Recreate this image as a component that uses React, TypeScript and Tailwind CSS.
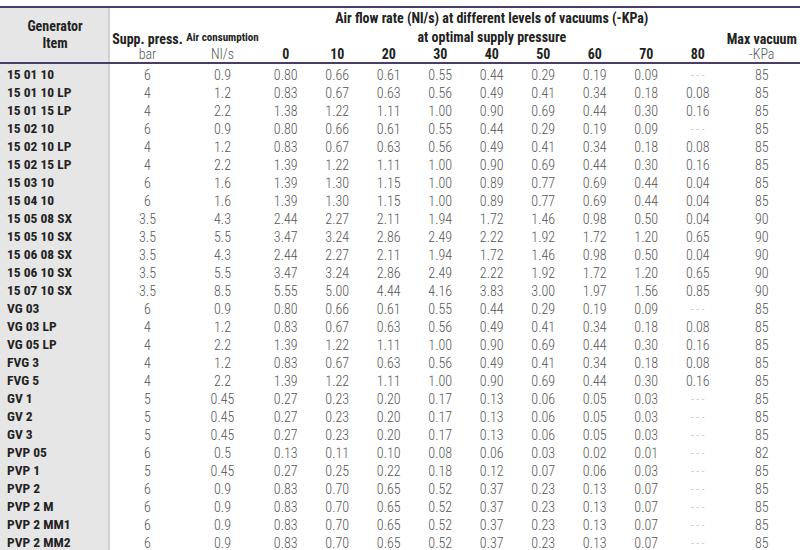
const font = "font-['Roboto_Condensed','Liberation_Sans_Narrow','DejaVu_Sans_Condensed',Roboto,sans-serif] [font-stretch:condensed]";

type Row = [string, string, string, string[], string];

const a = ['0.80', '0.66', '0.61', '0.55', '0.44', '0.29', '0.19', '0.09', '- - -'];
const b = ['0.83', '0.67', '0.63', '0.56', '0.49', '0.41', '0.34', '0.18', '0.08'];
const c = ['1.39', '1.22', '1.11', '1.00', '0.90', '0.69', '0.44', '0.30', '0.16'];
const d = ['1.39', '1.30', '1.15', '1.00', '0.89', '0.77', '0.69', '0.44', '0.04'];
const sx8 = ['2.44', '2.27', '2.11', '1.94', '1.72', '1.46', '0.98', '0.50', '0.04'];
const sx10 = ['3.47', '3.24', '2.86', '2.49', '2.22', '1.92', '1.72', '1.20', '0.65'];
const gv = ['0.27', '0.23', '0.20', '0.17', '0.13', '0.06', '0.05', '0.03', '- - -'];
const pvp2 = ['0.83', '0.70', '0.65', '0.52', '0.37', '0.23', '0.13', '0.07', '- - -'];

const rows: Row[] = [
  ['15 01 10', '6', '0.9', a, '85'],
  ['15 01 10 LP', '4', '1.2', b, '85'],
  ['15 01 15 LP', '4', '2.2', ['1.38', '1.22', '1.11', '1.00', '0.90', '0.69', '0.44', '0.30', '0.16'], '85'],
  ['15 02 10', '6', '0.9', a, '85'],
  ['15 02 10 LP', '4', '1.2', b, '85'],
  ['15 02 15 LP', '4', '2.2', c, '85'],
  ['15 03 10', '6', '1.6', d, '85'],
  ['15 04 10', '6', '1.6', d, '85'],
  ['15 05 08 SX', '3.5', '4.3', sx8, '90'],
  ['15 05 10 SX', '3.5', '5.5', sx10, '90'],
  ['15 06 08 SX', '3.5', '4.3', sx8, '90'],
  ['15 06 10 SX', '3.5', '5.5', sx10, '90'],
  ['15 07 10 SX', '3.5', '8.5', ['5.55', '5.00', '4.44', '4.16', '3.83', '3.00', '1.97', '1.56', '0.85'], '90'],
  ['VG 03', '6', '0.9', a, '85'],
  ['VG 03 LP', '4', '1.2', b, '85'],
  ['VG 05 LP', '4', '2.2', c, '85'],
  ['FVG 3', '4', '1.2', b, '85'],
  ['FVG 5', '4', '2.2', c, '85'],
  ['GV 1', '5', '0.45', gv, '85'],
  ['GV 2', '5', '0.45', gv, '85'],
  ['GV 3', '5', '0.45', gv, '85'],
  ['PVP 05', '6', '0.5', ['0.13', '0.11', '0.10', '0.08', '0.06', '0.03', '0.02', '0.01', '- - -'], '82'],
  ['PVP 1', '5', '0.45', ['0.27', '0.25', '0.22', '0.18', '0.12', '0.07', '0.06', '0.03', '- - -'], '85'],
  ['PVP 2', '6', '0.9', pvp2, '85'],
  ['PVP 2 M', '6', '0.9', pvp2, '85'],
  ['PVP 2 MM1', '6', '0.9', pvp2, '85'],
  ['PVP 2 MM2', '6', '0.9', pvp2, '85'],
];

const levels = ['0', '10', '20', '30', '40', '50', '60', '70', '80'];

const top = 'border-t-2 border-[#4a3d6b] p-0';
const bottom = 'border-b-2 border-[#4a3d6b] p-0';
const unit = `${bottom} text-[14px] font-light text-[#555] leading-none align-middle`;
const grey = 'bg-[#e6e6e6] shadow-[inset_-2px_0_0_#d2d2d2]';

export default function App() {
  return (
    <div className={`w-[800px] h-[550px] overflow-hidden bg-white pt-[6px] ${font}`}>
      <table className="w-[800px] table-fixed border-separate border-spacing-0">
        <colgroup>
          <col className="w-[110px]" />
          <col className="w-[75px]" />
          <col className="w-[75px]" />
          {levels.map((l) => (
            <col key={l} className="w-[51.5px]" />
          ))}
          <col />
        </colgroup>
        <thead className="text-[#222] whitespace-nowrap">
          <tr className="h-[22px]">
            <th
              rowSpan={3}
              className={`${grey} border-t-2 border-b-2 border-[#4a3d6b] p-0 text-[14px] leading-[17px] font-bold align-middle`}
            >
              Generator
              <br />
              Item
            </th>
            <th className={top} />
            <th className={top} />
            <th colSpan={9} className={`${top} text-[14px] font-bold leading-none`}>
              Air flow rate (Nl/s) at different levels of vacuums (-KPa)
            </th>
            <th className={top} />
          </tr>
          <tr className="h-[18px]">
            <th className="p-0 text-[14px] font-bold leading-none pt-[4px]">Supp. press.</th>
            <th className="p-0 text-[11px] font-bold leading-none pt-[1px]">Air consumption</th>
            <th colSpan={9} className="p-0 text-[14px] font-bold leading-none">
              at optimal supply pressure
            </th>
            <th className="p-0 text-[14px] font-bold leading-none pt-[4px]">Max vacuum</th>
          </tr>
          <tr className="h-[18px]">
            <th className={unit}>bar</th>
            <th className={unit}>Nl/s</th>
            {levels.map((l) => (
              <th key={l} className={`${bottom} text-[14px] font-bold leading-none align-middle`}>
                {l}
              </th>
            ))}
            <th className={unit}>-KPa</th>
          </tr>
        </thead>
        <tbody className="text-[14px] leading-none">
          <tr className="h-[2px]">
            <td className={`${grey} p-0`} />
            <td colSpan={12} className="p-0" />
          </tr>
          {rows.map(([item, sp, ac, vals, max], i) => (
            <tr key={i} className="h-[18px]">
              <td className={`${grey} p-0 pl-[7px] font-bold text-[#222] text-[13.5px] whitespace-nowrap`}>
                {item}
              </td>
              <td className="p-0 text-center font-light text-[#555]">{sp}</td>
              <td className="p-0 text-center font-light text-[#555]">{ac}</td>
              {vals.map((v, j) => (
                <td
                  key={j}
                  className={
                    v === '- - -'
                      ? 'p-0 text-center font-light text-[#aaa] text-[11px]'
                      : 'p-0 text-center font-light text-[#555]'
                  }
                >
                  {v}
                </td>
              ))}
              <td className="p-0 text-center font-light text-[#555]">{max}</td>
            </tr>
          ))}
        </tbody>
      </table>
    </div>
  );
}
